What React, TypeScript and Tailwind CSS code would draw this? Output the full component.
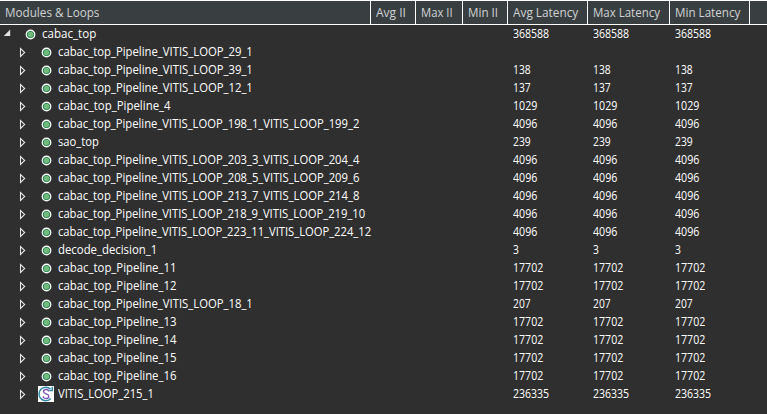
import { useLayoutEffect, useRef, useState } from "react";

type Row = { name: string; width: number; latency: string; loop?: boolean };

const rows: Row[] = [
  { name: "cabac_top_Pipeline_VITIS_LOOP_29_1", width: 195, latency: "" },
  { name: "cabac_top_Pipeline_VITIS_LOOP_39_1", width: 195, latency: "138" },
  { name: "cabac_top_Pipeline_VITIS_LOOP_12_1", width: 195, latency: "137" },
  { name: "cabac_top_Pipeline_4", width: 112.5, latency: "1029" },
  { name: "cabac_top_Pipeline_VITIS_LOOP_198_1_VITIS_LOOP_199_2", width: 301, latency: "4096" },
  { name: "sao_top", width: 41, latency: "239" },
  { name: "cabac_top_Pipeline_VITIS_LOOP_203_3_VITIS_LOOP_204_4", width: 301, latency: "4096" },
  { name: "cabac_top_Pipeline_VITIS_LOOP_208_5_VITIS_LOOP_209_6", width: 301, latency: "4096" },
  { name: "cabac_top_Pipeline_VITIS_LOOP_213_7_VITIS_LOOP_214_8", width: 301, latency: "4096" },
  { name: "cabac_top_Pipeline_VITIS_LOOP_218_9_VITIS_LOOP_219_10", width: 307, latency: "4096" },
  { name: "cabac_top_Pipeline_VITIS_LOOP_223_11_VITIS_LOOP_224_12", width: 313, latency: "4096" },
  { name: "decode_decision_1", width: 99.5, latency: "3" },
  { name: "cabac_top_Pipeline_11", width: 118.5, latency: "17702" },
  { name: "cabac_top_Pipeline_12", width: 118.5, latency: "17702" },
  { name: "cabac_top_Pipeline_VITIS_LOOP_18_1", width: 195, latency: "207" },
  { name: "cabac_top_Pipeline_13", width: 118.5, latency: "17702" },
  { name: "cabac_top_Pipeline_14", width: 118.5, latency: "17702" },
  { name: "cabac_top_Pipeline_15", width: 118.5, latency: "17702" },
  { name: "cabac_top_Pipeline_16", width: 118.5, latency: "17702" },
  { name: "VITIS_LOOP_215_1", width: 95.5, latency: "236335", loop: true },
];

const grid = "grid grid-cols-[371px_45px_47px_45px_80px_82px_80px_17px]";

/* Condenses a label horizontally to the given width. */
function Label({ text, width }: { text: string; width: number }) {
  const ref = useRef<HTMLSpanElement>(null);
  const [scale, setScale] = useState(1);
  useLayoutEffect(() => {
    if (ref.current && ref.current.offsetWidth) {
      setScale(width / ref.current.offsetWidth);
    }
  }, [text, width]);
  return (
    <span className="block" style={{ width }}>
      <span ref={ref} className="inline-block origin-left whitespace-nowrap" style={{ transform: `scaleX(${scale})` }}>
        {text}
      </span>
    </span>
  );
}

function Dot() {
  return (
    <svg width="9" height="9" viewBox="0 0 9 9" className="mt-px shrink-0 overflow-visible">
      <circle cx="4.5" cy="4.5" r="4.9" fill="#ffffff" />
      <circle cx="4.5" cy="4.5" r="3.6" fill="#23804f" />
      <circle cx="4.5" cy="4.5" r="2.7" fill="#72b97c" />
    </svg>
  );
}

function LoopIcon() {
  return (
    <svg width="16" height="16" viewBox="0 0 16 16" className="shrink-0">
      <rect width="16" height="16" fill="#fff" />
      <path d="M12.5 3A6.8 6.8 0 1 0 12.8 12.6" fill="none" stroke="#2f89a3" strokeWidth="1.5" />
      <path d="M14.3 .8v3.700h-3" fill="none" stroke="#2f89a3" strokeWidth="1.4" />
      <path
        d="M10.6 5.5V4.500C10 3.800 9.200 3.500 8.100 3.500c-1.500 0-2.500.8-2.500 2 0 2.800 5.200 2 5.200 4.800 0 1.400-1.100 2.200-2.700 2.200-1.200 0-2.100-.4-2.700-1.100v-1.200"
        fill="none"
        stroke="#7e57b5"
        strokeWidth="1.4"
      />
    </svg>
  );
}

function Latencies({ value }: { value: string }) {
  return (
    <>
      {[0, 1, 2].map((i) => (
        <div key={i} className="pl-[5px]">
          {value && <Label text={value} width={value.length * 6} />}
        </div>
      ))}
    </>
  );
}

const headers = [
  { text: "Modules & Loops", width: 94.5 },
  { text: "Avg II", width: 30 },
  { text: "Max II", width: 32 },
  { text: "Min II", width: 30 },
  { text: "Avg Latency", width: 65 },
  { text: "Max Latency", width: 67 },
  { text: "Min Latency", width: 65 },
];

export default function App() {
  return (
    <div className="h-[414px] w-[767px] overflow-hidden bg-[#2f2f2f] font-['Open_Sans','Noto_Sans',sans-serif] text-[12px] leading-[18px] text-white">
      <div className={`${grid} h-[25px] border-y border-white bg-[#393f41] text-[#d0d2d3]`}>
        {headers.map((h) => (
          <div key={h.text} className="border-r border-white pt-[3px] pl-[5px]">
            <Label text={h.text} width={h.width} />
          </div>
        ))}
        <div />
      </div>
      <div className={`${grid} h-[18px]`}>
        <div className="flex items-center pl-1">
          <svg width="6" height="6" viewBox="0 0 6 6" className="mb-[2px] shrink-0 overflow-visible">
            <path d="M6.2 -.4V6H-.2z" fill="#e2e2e2" />
          </svg>
          <span className="ml-4 flex w-4">
            <Dot />
          </span>
          <Label text="cabac_top" width={54} />
        </div>
        <div />
        <div />
        <div />
        <Latencies value="368588" />
      </div>
      {rows.map((r) => (
        <div key={r.name} className={`${grid} h-[18px]`}>
          <div className="flex items-center pl-5">
            <svg width="10" height="9" viewBox="0 0 10 9" className="shrink-0 overflow-visible">
              <path d="M.5 .5v8L4.700 4.500z" fill="none" stroke="#e8e8e8" strokeWidth="1.050" />
              <rect x="9" y="4" width="1" height="1" fill="#454545" />
            </svg>
            <span className="ml-2 flex w-5 shrink-0">
              {r.loop ? (
                <LoopIcon />
              ) : (
                <span className="ml-1 flex">
                  <Dot />
                </span>
              )}
            </span>
            <Label text={r.name} width={r.width} />
          </div>
          <div />
          <div />
          <div />
          <Latencies value={r.latency} />
        </div>
      ))}
    </div>
  );
}
